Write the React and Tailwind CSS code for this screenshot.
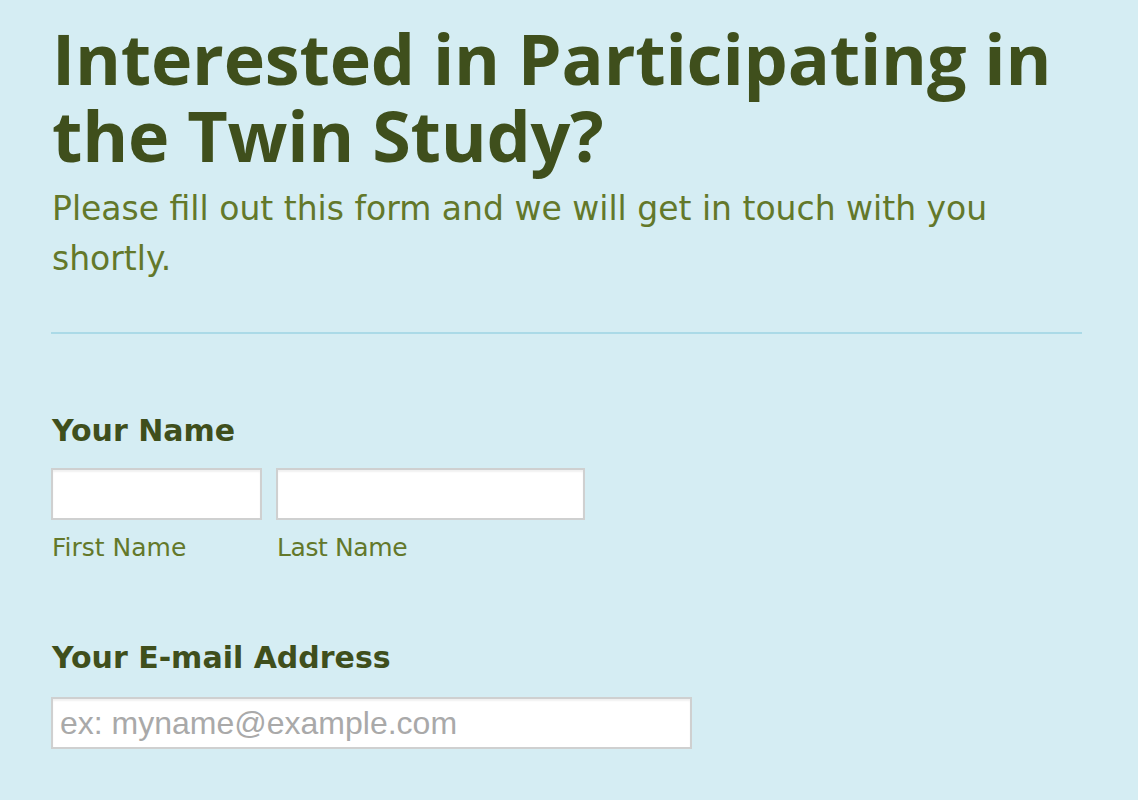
import React from "react";

const lucida = { fontFamily: '"DejaVu Sans", "Lucida Grande", Verdana, sans-serif' };

const App = () => {
  return (
    <div
      className="min-h-screen w-full bg-[#d5edf3] pl-[51px] pr-[56px]"
      style={lucida}
    >
      {/* header */}
      <div className="pt-[20px] pb-[48px] border-b-2 border-[#abdae7]">
        <h1
          className="text-[70px] leading-[77px] font-bold tracking-[-0.2px] text-[#3f4f1c] pl-[1px]"
          style={{ fontFamily: '"Open Sans", "DejaVu Sans", sans-serif' }}
        >
          Interested in Participating in the Twin Study?
        </h1>
        <p className="mt-[10px] text-[33px] leading-[50px] text-[#63782a] pl-[1px] pr-[60px]">
          Please fill out this form and we will get in touch with you shortly.
        </p>
      </div>

      {/* name */}
      <div className="pt-[77px]">
        <label className="block text-[30px] leading-[40px] font-bold text-[#3f4f1c] pl-[1px]">
          Your Name
        </label>
        <div className="flex gap-[14px] mt-[17px]">
          <div className="flex flex-col">
            <input
              type="text"
              className="w-[211px] h-[52px] bg-white border-2 border-[#cfd0d0] shadow-[inset_0_2px_2px_rgba(0,0,0,0.06)] outline-none"
            />
            <span className="text-[25px] leading-[30px] mt-[13px] text-[#63782a] pl-[1px]">
              First Name
            </span>
          </div>
          <div className="flex flex-col">
            <input
              type="text"
              className="w-[309px] h-[52px] bg-white border-2 border-[#cfd0d0] shadow-[inset_0_2px_2px_rgba(0,0,0,0.06)] outline-none"
            />
            <span className="text-[25px] leading-[30px] mt-[13px] text-[#63782a] pl-[1px] tracking-[-0.4px]">
              Last Name
            </span>
          </div>
        </div>
      </div>

      {/* email */}
      <div className="pt-[75px]">
        <label className="block text-[30px] leading-[40px] font-bold text-[#3f4f1c] pl-[1px]">
          Your E-mail Address
        </label>
        <input
          type="email"
          placeholder="ex: myname@example.com"
          className="mt-[19px] w-[641px] h-[52px] bg-white border-2 border-[#cfd0d0] px-[7px] text-[32px] shadow-[inset_0_2px_2px_rgba(0,0,0,0.06)] outline-none placeholder:text-[#a9a9a9]"
          style={{ fontFamily: '"Liberation Sans", Arial, sans-serif' }}
        />
      </div>
    </div>
  );
};

export default App;
